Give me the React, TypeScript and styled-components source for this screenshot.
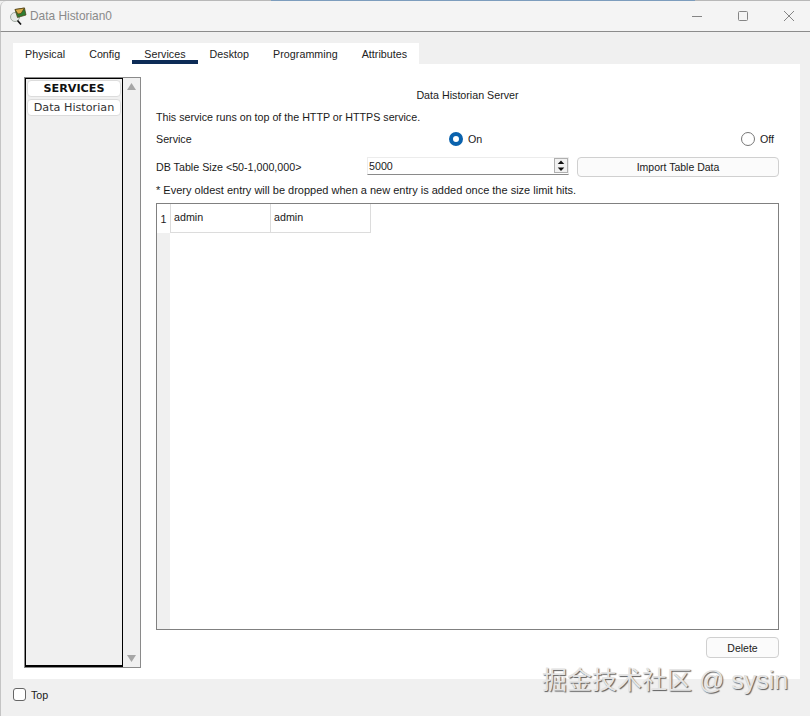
import styled, { createGlobalStyle } from "styled-components";

const TABS = ["Physical", "Config", "Services", "Desktop", "Programming", "Attributes"];
const ACTIVE_TAB = "Services";

const GlobalStyle = createGlobalStyle`
    html, body {
        margin: 0;
        padding: 0;
        background: #f0f0f0;
    }
    * {
        box-sizing: border-box;
    }
`;

const Page = styled.div`
    position: relative;
    width: 810px;
    height: 716px;
    overflow: hidden;
    display: flex;
    flex-direction: column;
    background: #f0f0f0;
    color: #1a1a1a;
    font-family: "Liberation Sans", Arial, sans-serif;
    font-size: 10.7px;
`;

const BackdropStrip = styled.div`
    height: 1px;
    flex: none;
    display: grid;
    grid-template-columns: 271px 424px 1fr;
`;

const BackdropPart = styled.div<{ $color: string }>`
    background: ${(p) => p.$color};
`;

const TitleBar = styled.header`
    height: 31px;
    flex: none;
    display: flex;
    align-items: center;
    padding: 0 0 1px 8px;
    background: #f4f4f4;
    border-bottom: 1px solid #8c8c8c;
    border-left: 1px solid #c4c4c4;
    border-top-left-radius: 6px;
`;

const AppIcon = styled.svg`
    width: 18px;
    height: 18px;
    flex: none;
`;

const WindowTitle = styled.span`
    margin-left: 3px;
    flex: 1;
    font-size: 11.9px;
    color: #8a8a8a;
`;

const WindowButton = styled.svg`
    width: 46px;
    height: 12px;
    flex: none;
    fill: none;
    stroke: #858585;
    stroke-width: 1;
`;

const Body = styled.div`
    flex: 1;
    display: flex;
    flex-direction: column;
    padding: 11px 10px 0 12px;
    border-left: 1px solid #c4c4c4;
`;

const TabBar = styled.nav`
    align-self: flex-start;
    height: 21px;
    display: flex;
    background: #fff;
`;

const Tab = styled.div<{ $active?: boolean }>`
    height: 21px;
    padding: 5px 12px 0;
    display: flex;
    align-items: center;
    color: #222;
    letter-spacing: 0.04px;
    border-bottom: 4px solid ${(p) => (p.$active ? "#0d2b56" : "transparent")};
`;

const Panel = styled.main`
    height: 615px;
    display: flex;
    gap: 15px;
    padding: 13px 21px 11px 11px;
    background: #fff;
`;

const Sidebar = styled.aside`
    width: 117px;
    flex: none;
    display: flex;
    border: 1px solid #8a8a8a;
    background: #f0f0f0;
`;

const ServiceList = styled.div`
    width: 98px;
    flex: none;
    display: flex;
    flex-direction: column;
    gap: 2px;
    padding: 1px;
    border: 1px solid #000;
    border-bottom-width: 2px;
`;

const ServiceItem = styled.div<{ $heading?: boolean }>`
    height: 17px;
    display: flex;
    align-items: center;
    justify-content: center;
    background: #fff;
    border: 1px solid #dcdcdc;
    border-radius: 4px;
    font-family: "DejaVu Sans", Verdana, sans-serif;
    font-size: 11.2px;
    font-weight: ${(p) => (p.$heading ? "bold" : "normal")};
    color: ${(p) => (p.$heading ? "#111" : "#333")};
`;

const Scrollbar = styled.div`
    flex: 1;
    display: flex;
    flex-direction: column;
    align-items: center;
    justify-content: space-between;
    padding: 5px 0;
`;

const ScrollArrow = styled.svg`
    width: 9px;
    height: 7px;
    fill: #a6a6a6;
`;

const Content = styled.section`
    flex: 1;
    display: flex;
    flex-direction: column;
`;

const Heading = styled.div`
    margin-top: 12px;
    height: 13px;
    line-height: 13px;
    text-align: center;
`;

const Line = styled.div`
    height: 13px;
    line-height: 13px;
`;

const Intro = styled(Line)`
    margin-top: 9px;
`;

const ServiceRow = styled.div`
    margin-top: 8px;
    height: 14px;
    display: grid;
    grid-template-columns: 293px 292px 1fr;
    align-items: center;
`;

const RadioLabel = styled.label`
    display: flex;
    align-items: center;
    gap: 5px;
`;

const Radio = styled.span<{ $checked?: boolean }>`
    width: 14px;
    height: 14px;
    border-radius: 50%;
    background: #fff;
    border: ${(p) => (p.$checked ? "4px solid #0a62ad" : "1px solid #777")};
`;

const SizeRow = styled.div`
    margin-top: 9px;
    height: 21px;
    display: flex;
    align-items: center;
`;

const SizeLabel = styled.span`
    width: 211px;
    flex: none;
    margin-top: 2px;
`;

const SizeInput = styled.div`
    width: 202px;
    height: 18px;
    flex: none;
    display: flex;
    align-items: center;
    justify-content: space-between;
    padding: 0 0 0 1px;
    border: 1px solid #ececec;
    border-bottom-color: #8a8a8a;
`;

const Spinner = styled.div`
    width: 14px;
    height: 15px;
    display: flex;
    flex-direction: column;
    border: 1px solid #b0b0b0;
    background: #f2f2f2;
`;

const SpinnerPart = styled.svg`
    flex: 1;
    min-height: 0;
    width: 100%;
    fill: #111;
`;

const Button = styled.button<{ $width: number; $height: number }>`
    width: ${(p) => p.$width}px;
    height: ${(p) => p.$height}px;
    flex: none;
    padding: 0;
    background: #fbfbfb;
    border: 1px solid #d0d0d0;
    border-radius: 4px;
    color: #1a1a1a;
    font-family: inherit;
    font-size: 10.5px;
`;

const ImportButton = styled(Button)`
    margin: 2px 0 0 8px;
`;

const Note = styled(Line)`
    margin-top: 8px;
    font-size: 11px;
`;

const TableBox = styled.div`
    margin-top: 6px;
    height: 427px;
    display: flex;
    border: 1px solid #808080;
`;

const RowHeader = styled.div`
    width: 13px;
    flex: none;
    background: #f0f0f0;
`;

const RowNumber = styled.div`
    height: 29px;
    display: flex;
    align-items: center;
    justify-content: center;
    background: #fff;
`;

const Cells = styled.div`
    height: 29px;
    display: flex;
`;

const Cell = styled.div`
    width: 101px;
    height: 29px;
    padding: 0 0 3px 3px;
    display: flex;
    align-items: center;
    border: 1px solid #dcdcdc;
    border-width: 0 1px 1px 1px;
    margin-left: -1px;
    &:first-of-type {
        margin-left: 0;
    }
`;

const ActionRow = styled.div`
    margin-top: 7px;
    display: flex;
    justify-content: flex-end;
`;

const Footer = styled.footer`
    flex: 1;
    display: flex;
    align-items: flex-start;
    gap: 5px;
    padding: 9px 0 0;
    line-height: 15px;
`;

const Checkbox = styled.span`
    width: 13px;
    height: 13px;
    background: #fff;
    border: 1px solid #666;
    border-radius: 3px;
`;

const Watermark = styled.div`
    position: absolute;
    left: 542px;
    top: 663px;
    white-space: nowrap;
    font-family: "Liberation Sans", "Noto Sans CJK SC", sans-serif;
    font-size: 25px;
    line-height: 34px;
    color: #e4e4e4;
    text-shadow: 1px 1px 1px #5c5c5c;
`;

const App = () => {
    return (
        <Page>
            <GlobalStyle />
            <BackdropStrip>
                <BackdropPart $color="#b8b8b8" />
                <BackdropPart $color="#7d9dbd" />
                <BackdropPart $color="#b8b8b8" />
            </BackdropStrip>
            <TitleBar>
                <AppIcon viewBox="0 0 18 18">
                    <circle cx="6" cy="10" r="4.5" fill="#e6e9e6" stroke="#a3aca3" />
                    <path d="M8.5 13.5l3.5 4" stroke="#111" strokeWidth="1.6" />
                    <path d="M6 2.5l9.5-1.5 1.5 7-8.5 2.5z" fill="#2e7d32" stroke="#4a3b10" strokeWidth=".7" />
                    <path d="M6 2.5l9.5-1.5-3.5 5.5-3 .5z" fill="#d9ab4a" stroke="#4a3b10" strokeWidth=".7" />
                </AppIcon>
                <WindowTitle>Data Historian0</WindowTitle>
                <WindowButton viewBox="0 0 46 12">
                    <path d="M20 6.5h10" />
                </WindowButton>
                <WindowButton viewBox="0 0 46 12">
                    <rect x="20.5" y="1.5" width="9" height="9" rx="1" />
                </WindowButton>
                <WindowButton viewBox="0 0 46 12">
                    <path d="M20 1l10 10M30 1L20 11" />
                </WindowButton>
            </TitleBar>
            <Body>
                <TabBar>
                    {TABS.map((tab) => (
                        <Tab key={tab} $active={tab === ACTIVE_TAB}>
                            {tab}
                        </Tab>
                    ))}
                </TabBar>
                <Panel>
                    <Sidebar>
                        <ServiceList>
                            <ServiceItem $heading>SERVICES</ServiceItem>
                            <ServiceItem>Data Historian</ServiceItem>
                        </ServiceList>
                        <Scrollbar>
                            <ScrollArrow viewBox="0 0 9 7">
                                <path d="M4.5 0L9 7H0z" />
                            </ScrollArrow>
                            <ScrollArrow viewBox="0 0 9 7">
                                <path d="M0 0h9L4.5 7z" />
                            </ScrollArrow>
                        </Scrollbar>
                    </Sidebar>
                    <Content>
                        <Heading>Data Historian Server</Heading>
                        <Intro>This service runs on top of the HTTP or HTTPS service.</Intro>
                        <ServiceRow>
                            <span>Service</span>
                            <RadioLabel>
                                <Radio $checked />
                                On
                            </RadioLabel>
                            <RadioLabel>
                                <Radio />
                                Off
                            </RadioLabel>
                        </ServiceRow>
                        <SizeRow>
                            <SizeLabel>DB Table Size &lt;50-1,000,000&gt;</SizeLabel>
                            <SizeInput>
                                5000
                                <Spinner>
                                    <SpinnerPart viewBox="0 0 12 7">
                                        <path d="M6 1.5l3.5 4h-7z" />
                                    </SpinnerPart>
                                    <SpinnerPart viewBox="0 0 12 7">
                                        <path d="M2.5 1.5h7L6 5.5z" />
                                    </SpinnerPart>
                                </Spinner>
                            </SizeInput>
                            <ImportButton $width={202} $height={20}>
                                Import Table Data
                            </ImportButton>
                        </SizeRow>
                        <Note>* Every oldest entry will be dropped when a new entry is added once the size limit hits.</Note>
                        <TableBox>
                            <RowHeader>
                                <RowNumber>1</RowNumber>
                            </RowHeader>
                            <Cells>
                                <Cell>admin</Cell>
                                <Cell>admin</Cell>
                            </Cells>
                        </TableBox>
                        <ActionRow>
                            <Button $width={73} $height={21}>
                                Delete
                            </Button>
                        </ActionRow>
                    </Content>
                </Panel>
                <Footer>
                    <Checkbox />
                    Top
                </Footer>
            </Body>
            <Watermark>掘金技术社区 @ sysin</Watermark>
        </Page>
    );
};

export default App;
